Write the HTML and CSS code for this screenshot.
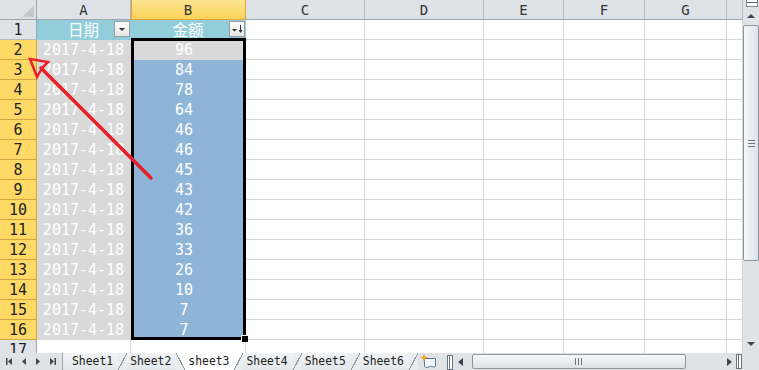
FILE: index.html
```html
<!DOCTYPE html>
<html lang="zh">
<head>
    <meta charset="UTF-8" />
    <title>金额排序</title>
    <link rel="stylesheet" href="styles.css">
</head>
<body>
<div class="app">
    <div class="main">
        <div class="sheet">
            <div class="row head">
                <div class="corner"><span class="tri"></span></div>
                <div>A</div>
                <div class="sel">B</div>
                <div>C</div>
                <div>D</div>
                <div>E</div>
                <div>F</div>
                <div>G</div>
                <div></div>
            </div>
            <div class="row">
                <div class="rowhd">1</div>
                <div class="title">日期<span class="filter"><svg width="14" height="14"><polygon points="4,6 10,6 7,9" fill="#333"/></svg></span></div>
                <div class="title">金额<span class="filter"><svg width="14" height="14"><polygon points="2,7 7,7 4.5,9.5" fill="#333"/><line x1="10.5" y1="3" x2="10.5" y2="10" stroke="#333"/><polygon points="8.5,8 12.5,8 10.5,11" fill="#333"/></svg></span></div>
                <div></div><div></div><div></div><div></div><div></div><div></div>
            </div>
            <div class="row">
                <div class="rowhd sel">2</div>
                <div class="date">2017-4-18</div>
                <div class="num active">96</div>
                <div></div><div></div><div></div><div></div><div></div><div></div>
            </div>
            <div class="row">
                <div class="rowhd sel">3</div>
                <div class="date">2017-4-18</div>
                <div class="num">84</div>
                <div></div><div></div><div></div><div></div><div></div><div></div>
            </div>
            <div class="row">
                <div class="rowhd sel">4</div>
                <div class="date">2017-4-18</div>
                <div class="num">78</div>
                <div></div><div></div><div></div><div></div><div></div><div></div>
            </div>
            <div class="row">
                <div class="rowhd sel">5</div>
                <div class="date">2017-4-18</div>
                <div class="num">64</div>
                <div></div><div></div><div></div><div></div><div></div><div></div>
            </div>
            <div class="row">
                <div class="rowhd sel">6</div>
                <div class="date">2017-4-18</div>
                <div class="num">46</div>
                <div></div><div></div><div></div><div></div><div></div><div></div>
            </div>
            <div class="row">
                <div class="rowhd sel">7</div>
                <div class="date">2017-4-18</div>
                <div class="num">46</div>
                <div></div><div></div><div></div><div></div><div></div><div></div>
            </div>
            <div class="row">
                <div class="rowhd sel">8</div>
                <div class="date">2017-4-18</div>
                <div class="num">45</div>
                <div></div><div></div><div></div><div></div><div></div><div></div>
            </div>
            <div class="row">
                <div class="rowhd sel">9</div>
                <div class="date">2017-4-18</div>
                <div class="num">43</div>
                <div></div><div></div><div></div><div></div><div></div><div></div>
            </div>
            <div class="row">
                <div class="rowhd sel">10</div>
                <div class="date">2017-4-18</div>
                <div class="num">42</div>
                <div></div><div></div><div></div><div></div><div></div><div></div>
            </div>
            <div class="row">
                <div class="rowhd sel">11</div>
                <div class="date">2017-4-18</div>
                <div class="num">36</div>
                <div></div><div></div><div></div><div></div><div></div><div></div>
            </div>
            <div class="row">
                <div class="rowhd sel">12</div>
                <div class="date">2017-4-18</div>
                <div class="num">33</div>
                <div></div><div></div><div></div><div></div><div></div><div></div>
            </div>
            <div class="row">
                <div class="rowhd sel">13</div>
                <div class="date">2017-4-18</div>
                <div class="num">26</div>
                <div></div><div></div><div></div><div></div><div></div><div></div>
            </div>
            <div class="row">
                <div class="rowhd sel">14</div>
                <div class="date">2017-4-18</div>
                <div class="num">10</div>
                <div></div><div></div><div></div><div></div><div></div><div></div>
            </div>
            <div class="row">
                <div class="rowhd sel">15</div>
                <div class="date">2017-4-18</div>
                <div class="num">7</div>
                <div></div><div></div><div></div><div></div><div></div><div></div>
            </div>
            <div class="row">
                <div class="rowhd sel">16</div>
                <div class="date">2017-4-18</div>
                <div class="num">7</div>
                <div></div><div></div><div></div><div></div><div></div><div></div>
            </div>
            <div class="row">
                <div class="rowhd">17</div>
                <div></div><div></div>
                <div></div><div></div><div></div><div></div><div></div><div></div>
            </div>

            <div class="selection"></div>
            <svg class="pointer" width="743" height="353">
                <polygon points="30,59 48,62 42,68 37,77" fill="none" stroke="#e8202a" stroke-width="2.5"/>
                <line x1="41" y1="68" x2="151" y2="178" stroke="#e8202a" stroke-width="3.5" stroke-linecap="round"/>
            </svg>
        </div>

        <div class="vscroll">
            <div class="vsplit"></div>
            <div class="vbtn"><span class="up"></span></div>
            <div class="vthumb"><span class="vgrip"></span></div>
            <div class="fill"></div>
            <div class="vbtn"><span class="down"></span></div>
        </div>
    </div>

    <div class="bar">
        <svg class="nav" width="62" height="17">
            <rect x="6" y="5" width="1.5" height="7" fill="#404850"/>
            <polygon points="12,5 12,12 8,8.5" fill="#404850"/>
            <polygon points="26,5 26,12 22,8.5" fill="#404850"/>
            <polygon points="36,5 36,12 40,8.5" fill="#404850"/>
            <polygon points="50,5 50,12 54,8.5" fill="#404850"/>
            <rect x="54.5" y="5" width="1.5" height="7" fill="#404850"/>
        </svg>
        <div class="tabs">
            <span class="tab first">Sheet1</span>
            <span class="slash"></span>
            <span class="tab">Sheet2</span>
            <span class="slash into-on"></span>
            <span class="tab on">sheet3</span>
            <span class="slash out-on"></span>
            <span class="tab">Sheet4</span>
            <span class="slash"></span>
            <span class="tab">Sheet5</span>
            <span class="slash"></span>
            <span class="tab">Sheet6</span>
            <span class="slash"></span>
            <svg class="newsheet" width="18" height="16">
                <path d="M4.5 4.5h11v8c-2 1.5-3.5-1-5.5 0s-3.5 1.5-5.5 0z" fill="#f4f7fb" stroke="#56779c"/>
                <polygon points="4,0 5.2,2.8 8,3.5 5.2,4.6 4,8 2.8,4.6 0,3.5 2.8,2.8" fill="#f3a81c"/>
            </svg>
        </div>
        <span class="split"></span>
        <div class="hscroll">
            <span class="left"></span>
            <div class="hthumb"><span class="hgrip"></span></div>
            <div class="fill"></div>
            <span class="right"></span>
            <span class="split"></span>
        </div>
        <div class="corner-box"></div>
    </div>
</div>
</body>
</html>
```

FILE: styles.css
```css
body {
    margin: 0;
    background: #fff;
    font-family: "DejaVu Sans Mono", monospace;
    overflow: hidden;
}
.app {
    width: 759px;
    height: 370px;
    display: flex;
    flex-direction: column;
}
.main {
    display: flex;
    height: 353px;
}
.sheet {
    position: relative;
    width: 743px;
    overflow: hidden;
}
.row {
    display: grid;
    grid-template-columns: 37px 94px 115px 119px 119px 80px 81px 82px 16px;
    grid-template-rows: 20px;
    height: 20px;
}
.row > div {
    box-sizing: border-box;
    border-right: 1px solid #d6d6d6;
    border-bottom: 1px solid #d6d6d6;
    display: flex;
    align-items: center;
    justify-content: center;
    font-size: 15px;
    line-height: 16px;
    white-space: nowrap;
    overflow: hidden;
}

/* column headers */
.head > div {
    background: #dfe3e8;
    border-right-color: #b3b9c0;
    border-bottom-color: #9ea5ad;
    color: #333;
    font-size: 14px;
}
.head > .sel {
    background: linear-gradient(#fde690, #f8d25a);
    border-right-color: #e0a63b;
    border-bottom-color: #e0a63b;
    box-shadow: inset 1px 0 #e0a63b;
}
.head > .corner {
    justify-content: flex-end;
    align-items: flex-end;
    padding: 0 2px 2px 0;
    border-right-color: #9ea5ad;
}
.tri {
    width: 0;
    height: 0;
    border-left: 12px solid transparent;
    border-bottom: 12px solid #c3c8cf;
}

/* row headers */
.row > .rowhd {
    background: #dfe3e8;
    border-right-color: #9ea5ad;
    border-bottom-color: #b3b9c0;
    color: #222;
}
.row > .rowhd.sel {
    background: #ffd966;
    border-bottom-color: #d4a63f;
    border-right-color: #d4a63f;
}

/* data */
.row > .title {
    position: relative;
    background: #92cddc;
    border-color: #92cddc;
    color: #fff;
    font-family: "Noto Sans CJK SC", sans-serif;
    font-size: 15.5px;
    line-height: 19px;
    overflow: visible;
}
.filter {
    position: absolute;
    right: 0;
    top: 1px;
    width: 16px;
    height: 16px;
    box-sizing: border-box;
    border: 1px solid #9c9c9c;
    background: linear-gradient(#fff, #e6e6e6);
}
.filter svg {
    display: block;
}
.row > .date {
    background: #d9d9d9;
    border-color: #d9d9d9;
    color: #fff;
}
.row > .num {
    background: #8eb4d8;
    border-color: #8eb4d8;
    color: #fff;
    padding-right: 8px;
}
.row > .num.active {
    background: #d9d9d9;
    border-color: #d9d9d9;
}

/* overlays */
.selection {
    position: absolute;
    left: 131px;
    top: 38px;
    width: 115px;
    height: 302px;
    box-sizing: border-box;
    border: 3px solid #000;
}
.selection::after {
    content: "";
    position: absolute;
    right: -5px;
    bottom: -5px;
    width: 6px;
    height: 6px;
    background: #000;
    border-left: 1px solid #fff;
    border-top: 1px solid #fff;
}
.pointer {
    position: absolute;
    left: 0;
    top: 0;
    pointer-events: none;
}

/* vertical scrollbar */
.vscroll {
    width: 16px;
    background: #dfe3e8;
    display: flex;
    flex-direction: column;
}
.vsplit {
    height: 6px;
    margin: 0 1px 0 3px;
    border: 1px solid #7d8793;
    border-top: none;
    background: linear-gradient(#fff 2px, #5f6975 2px, #5f6975 3px, #fff 3px);
}
.vbtn {
    height: 18px;
    display: flex;
    align-items: center;
    justify-content: center;
}
.up {
    border-left: 4px solid transparent;
    border-right: 4px solid transparent;
    border-bottom: 4px solid #3c4550;
}
.down {
    border-left: 4px solid transparent;
    border-right: 4px solid transparent;
    border-top: 4px solid #3c4550;
}
.vthumb {
    height: 236px;
    box-sizing: border-box;
    border: 1px solid #8c96a1;
    border-radius: 2px;
    background: linear-gradient(to right, #f6f8fa, #dde2e8);
    display: flex;
    align-items: center;
    justify-content: center;
}
.vgrip {
    width: 7px;
    height: 7px;
    background: repeating-linear-gradient(#6f7883 0 1px, transparent 1px 3px);
}
.fill {
    flex: 1;
}

/* bottom bar */
.bar {
    display: flex;
    height: 17px;
    background: #dfe3e8;
    font-size: 11.4px;
    color: #222;
}
.nav {
    display: block;
    flex: none;
}
.tabs {
    display: flex;
}
.tab {
    padding: 0 5px 0 3px;
    line-height: 17px;
    background: linear-gradient(#f1f3f5, #e3e7eb);
}
.tab.first {
    padding-left: 9px;
    border-left: 1px solid #9aa2ac;
}
.tab.on {
    background: #fff;
}
.slash {
    width: 9px;
    background: linear-gradient(to bottom right, #eaedf0 46.5%, #8f98a3 46.5%, #8f98a3 53.5%, #eaedf0 53.5%);
}
.slash.into-on {
    background: linear-gradient(to bottom left, #fff 46.5%, #8f98a3 46.5%, #8f98a3 53.5%, #eaedf0 53.5%);
}
.slash.out-on {
    background: linear-gradient(to bottom right, #fff 46.5%, #8f98a3 46.5%, #8f98a3 53.5%, #eaedf0 53.5%);
}
.newsheet {
    display: block;
    margin: 1px 0 0 2px;
}
.split {
    width: 4px;
    height: 13px;
    margin: 2px 0 0 9px;
    border: 1px solid #6b7580;
    background: linear-gradient(to right, #fff 1px, #6b7580 1px, #6b7580 2px, #fff 2px);
}
.hscroll {
    flex: 1;
    display: flex;
    align-items: center;
    margin-left: 2px;
}
.left {
    margin-left: 3px;
    border-top: 4px solid transparent;
    border-bottom: 4px solid transparent;
    border-right: 5px solid #3c4550;
}
.right {
    margin-right: 4px;
    border-top: 4px solid transparent;
    border-bottom: 4px solid transparent;
    border-left: 5px solid #3c4550;
}
.hthumb {
    width: 214px;
    height: 15px;
    margin-left: 9px;
    box-sizing: border-box;
    border: 1px solid #8c96a1;
    border-radius: 2px;
    background: linear-gradient(#f6f8fa, #dde2e8);
    display: flex;
    align-items: center;
    justify-content: center;
}
.hgrip {
    width: 7px;
    height: 7px;
    background: repeating-linear-gradient(to right, #6f7883 0 1px, transparent 1px 3px);
}
.hscroll .split {
    margin: 0 1px 0 0;
}
.corner-box {
    width: 16px;
}
```
